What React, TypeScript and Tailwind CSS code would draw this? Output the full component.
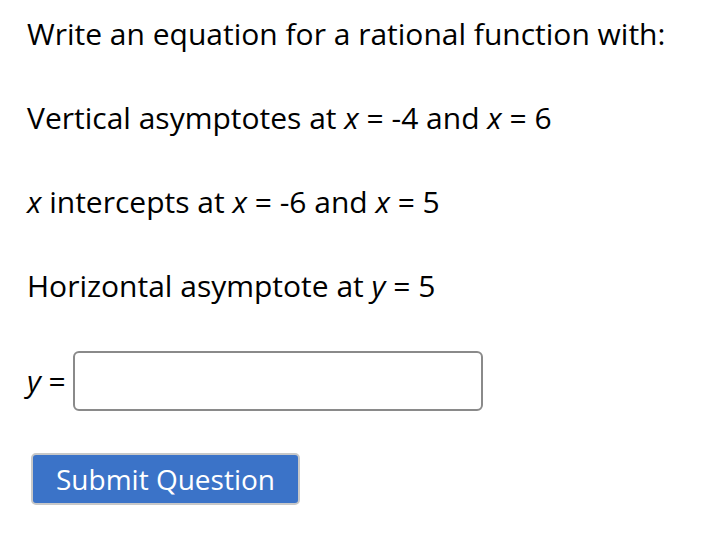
import React from 'react';

const V: React.FC<{ children: React.ReactNode }> = ({ children }) => (
  <span className="italic">{children}</span>
);

const App: React.FC = () => {
  return (
    <div className="min-h-[538px] bg-white px-[27px] pt-[13px] text-[30px] leading-[42px] text-black [font-family:'Open_Sans',sans-serif]">
      <p>Write an equation for a rational function with:</p>
      <p className="mt-[42px]">
        Vertical asymptotes at <V>x</V> = -4 and <V>x</V> = 6
      </p>
      <p className="mt-[42px]">
        <V>x</V> intercepts at <V>x</V> = -6 and <V>x</V> = 5
      </p>
      <p className="mt-[42px]">
        Horizontal asymptote at <V>y</V> = 5
      </p>
      <div className="mt-[44px] flex items-center">
        <span>
          <V>y</V> =
        </span>
        <input
          type="text"
          className="ml-[7px] h-[60px] w-[410px] rounded-[6px] border-2 border-[#8a8a8a] bg-white px-2 outline-none"
        />
      </div>
      <button className="ml-[4px] mt-[42px] h-[52px] w-[269px] rounded-[5px] border-2 border-[#c8c8c8] bg-[#3b73c8] text-[28px] leading-none text-white">
        Submit Question
      </button>
    </div>
  );
};

export default App;
